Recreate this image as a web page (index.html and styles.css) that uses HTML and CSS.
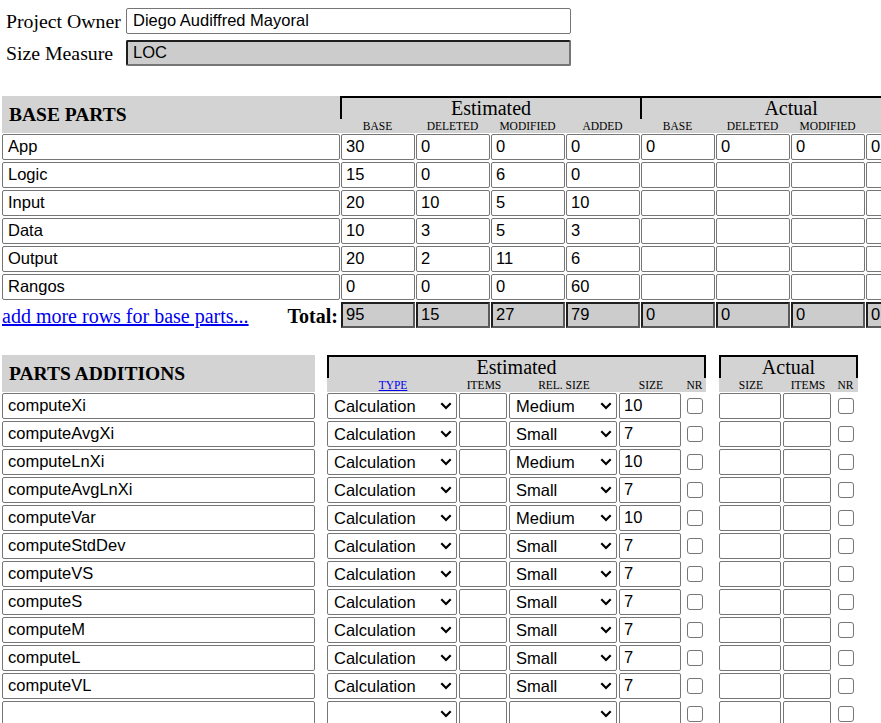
FILE: index.html
```html
<!DOCTYPE html>
<html>
<head>
<meta charset="utf-8">
<title>PSP Size Estimating</title>
<link rel="stylesheet" href="styles.css">
</head>
<body>
<div class="meta">
  <label>Project Owner</label>
  <input class="field" type="text" value="Diego Audiffred Mayoral">
  <label>Size Measure</label>
  <input class="field ro" type="text" value="LOC" readonly>
</div>

<table class="grid base">
  <colgroup>
    <col class="c-name"><col class="c-num"><col class="c-num"><col class="c-num"><col class="c-num"><col class="c-num"><col class="c-num"><col class="c-num"><col class="c-num">
  </colgroup>
  <thead>
    <tr class="grp">
      <th rowspan="2" class="title">BASE PARTS</th>
      <th colspan="4" class="group">Estimated</th>
      <th colspan="4" class="group">Actual</th>
    </tr>
    <tr class="sub">
      <th>BASE</th><th>DELETED</th><th>MODIFIED</th><th>ADDED</th>
      <th>BASE</th><th>DELETED</th><th>MODIFIED</th><th>ADDED</th>
    </tr>
  </thead>
  <tbody>
    <tr><td><input class="nm" value="App"></td><td><input class="num" value="30"></td><td><input class="num" value="0"></td><td><input class="num" value="0"></td><td><input class="num" value="0"></td><td><input class="num" value="0"></td><td><input class="num" value="0"></td><td><input class="num" value="0"></td><td><input class="num" value="0"></td></tr>
    <tr><td><input class="nm" value="Logic"></td><td><input class="num" value="15"></td><td><input class="num" value="0"></td><td><input class="num" value="6"></td><td><input class="num" value="0"></td><td><input class="num" value=""></td><td><input class="num" value=""></td><td><input class="num" value=""></td><td><input class="num" value=""></td></tr>
    <tr><td><input class="nm" value="Input"></td><td><input class="num" value="20"></td><td><input class="num" value="10"></td><td><input class="num" value="5"></td><td><input class="num" value="10"></td><td><input class="num" value=""></td><td><input class="num" value=""></td><td><input class="num" value=""></td><td><input class="num" value=""></td></tr>
    <tr><td><input class="nm" value="Data"></td><td><input class="num" value="10"></td><td><input class="num" value="3"></td><td><input class="num" value="5"></td><td><input class="num" value="3"></td><td><input class="num" value=""></td><td><input class="num" value=""></td><td><input class="num" value=""></td><td><input class="num" value=""></td></tr>
    <tr><td><input class="nm" value="Output"></td><td><input class="num" value="20"></td><td><input class="num" value="2"></td><td><input class="num" value="11"></td><td><input class="num" value="6"></td><td><input class="num" value=""></td><td><input class="num" value=""></td><td><input class="num" value=""></td><td><input class="num" value=""></td></tr>
    <tr><td><input class="nm" value="Rangos"></td><td><input class="num" value="0"></td><td><input class="num" value="0"></td><td><input class="num" value="0"></td><td><input class="num" value="60"></td><td><input class="num" value=""></td><td><input class="num" value=""></td><td><input class="num" value=""></td><td><input class="num" value=""></td></tr>
    <tr class="total">
      <td><div class="totlabel"><a href="#">add more rows for base parts...</a><b>Total:</b></div></td>
      <td><input class="num tot" value="95" readonly></td><td><input class="num tot" value="15" readonly></td><td><input class="num tot" value="27" readonly></td><td><input class="num tot" value="79" readonly></td>
      <td><input class="num tot" value="0" readonly></td><td><input class="num tot" value="0" readonly></td><td><input class="num tot" value="0" readonly></td><td><input class="num tot" value="0" readonly></td>
    </tr>
  </tbody>
</table>

<table class="grid adds">
  <colgroup>
    <col class="a-name"><col class="a-gap1"><col class="a-type"><col class="a-items"><col class="a-rel"><col class="a-size"><col class="a-nr"><col class="a-gap2"><col class="a-size"><col class="a-items"><col class="a-nr2">
  </colgroup>
  <thead>
    <tr class="grp">
      <th rowspan="2" class="title">PARTS ADDITIONS</th>
      <th rowspan="2" class="blank"></th>
      <th colspan="5" class="group boxed">Estimated</th>
      <th rowspan="2" class="blank"></th>
      <th colspan="3" class="group boxed">Actual</th>
    </tr>
    <tr class="sub">
      <th><a href="#">TYPE</a></th><th>ITEMS</th><th>REL. SIZE</th><th>SIZE</th><th>NR</th>
      <th>SIZE</th><th>ITEMS</th><th>NR</th>
    </tr>
  </thead>
  <tbody>
    <tr><td><input class="nm" value="computeXi"></td><td></td><td><select class="sel"><option>Calculation</option></select></td><td><input class="num" value=""></td><td><select class="sel"><option>Medium</option></select></td><td><input class="num" value="10"></td><td class="chk"><input type="checkbox"></td><td></td><td><input class="num" value=""></td><td><input class="num" value=""></td><td class="chk"><input type="checkbox"></td></tr>
    <tr><td><input class="nm" value="computeAvgXi"></td><td></td><td><select class="sel"><option>Calculation</option></select></td><td><input class="num" value=""></td><td><select class="sel"><option>Small</option></select></td><td><input class="num" value="7"></td><td class="chk"><input type="checkbox"></td><td></td><td><input class="num" value=""></td><td><input class="num" value=""></td><td class="chk"><input type="checkbox"></td></tr>
    <tr><td><input class="nm" value="computeLnXi"></td><td></td><td><select class="sel"><option>Calculation</option></select></td><td><input class="num" value=""></td><td><select class="sel"><option>Medium</option></select></td><td><input class="num" value="10"></td><td class="chk"><input type="checkbox"></td><td></td><td><input class="num" value=""></td><td><input class="num" value=""></td><td class="chk"><input type="checkbox"></td></tr>
    <tr><td><input class="nm" value="computeAvgLnXi"></td><td></td><td><select class="sel"><option>Calculation</option></select></td><td><input class="num" value=""></td><td><select class="sel"><option>Small</option></select></td><td><input class="num" value="7"></td><td class="chk"><input type="checkbox"></td><td></td><td><input class="num" value=""></td><td><input class="num" value=""></td><td class="chk"><input type="checkbox"></td></tr>
    <tr><td><input class="nm" value="computeVar"></td><td></td><td><select class="sel"><option>Calculation</option></select></td><td><input class="num" value=""></td><td><select class="sel"><option>Medium</option></select></td><td><input class="num" value="10"></td><td class="chk"><input type="checkbox"></td><td></td><td><input class="num" value=""></td><td><input class="num" value=""></td><td class="chk"><input type="checkbox"></td></tr>
    <tr><td><input class="nm" value="computeStdDev"></td><td></td><td><select class="sel"><option>Calculation</option></select></td><td><input class="num" value=""></td><td><select class="sel"><option>Small</option></select></td><td><input class="num" value="7"></td><td class="chk"><input type="checkbox"></td><td></td><td><input class="num" value=""></td><td><input class="num" value=""></td><td class="chk"><input type="checkbox"></td></tr>
    <tr><td><input class="nm" value="computeVS"></td><td></td><td><select class="sel"><option>Calculation</option></select></td><td><input class="num" value=""></td><td><select class="sel"><option>Small</option></select></td><td><input class="num" value="7"></td><td class="chk"><input type="checkbox"></td><td></td><td><input class="num" value=""></td><td><input class="num" value=""></td><td class="chk"><input type="checkbox"></td></tr>
    <tr><td><input class="nm" value="computeS"></td><td></td><td><select class="sel"><option>Calculation</option></select></td><td><input class="num" value=""></td><td><select class="sel"><option>Small</option></select></td><td><input class="num" value="7"></td><td class="chk"><input type="checkbox"></td><td></td><td><input class="num" value=""></td><td><input class="num" value=""></td><td class="chk"><input type="checkbox"></td></tr>
    <tr><td><input class="nm" value="computeM"></td><td></td><td><select class="sel"><option>Calculation</option></select></td><td><input class="num" value=""></td><td><select class="sel"><option>Small</option></select></td><td><input class="num" value="7"></td><td class="chk"><input type="checkbox"></td><td></td><td><input class="num" value=""></td><td><input class="num" value=""></td><td class="chk"><input type="checkbox"></td></tr>
    <tr><td><input class="nm" value="computeL"></td><td></td><td><select class="sel"><option>Calculation</option></select></td><td><input class="num" value=""></td><td><select class="sel"><option>Small</option></select></td><td><input class="num" value="7"></td><td class="chk"><input type="checkbox"></td><td></td><td><input class="num" value=""></td><td><input class="num" value=""></td><td class="chk"><input type="checkbox"></td></tr>
    <tr><td><input class="nm" value="computeVL"></td><td></td><td><select class="sel"><option>Calculation</option></select></td><td><input class="num" value=""></td><td><select class="sel"><option>Small</option></select></td><td><input class="num" value="7"></td><td class="chk"><input type="checkbox"></td><td></td><td><input class="num" value=""></td><td><input class="num" value=""></td><td class="chk"><input type="checkbox"></td></tr>
    <tr><td><input class="nm" value=""></td><td></td><td><select class="sel"><option></option></select></td><td><input class="num" value=""></td><td><select class="sel"><option></option></select></td><td><input class="num" value=""></td><td class="chk"><input type="checkbox"></td><td></td><td><input class="num" value=""></td><td><input class="num" value=""></td><td class="chk"><input type="checkbox"></td></tr>
  </tbody>
</table>
</body>
</html>
```

FILE: styles.css
```css
html {
  overflow: hidden;
}

body {
  margin: 0;
  background: #fff;
  color: #000;
  font-family: "Liberation Serif", "Times New Roman", serif;
  font-size: 20px;
}

.meta {
  display: grid;
  grid-template-columns: 120px 445px;
  row-gap: 6px;
  align-items: center;
  padding: 8px 0 0 6px;
}

.meta label {
  font-size: 19.8px;
}

.field {
  box-sizing: border-box;
  height: 26px;
  margin: 0;
  padding: 0 6px 2px;
  border: 1px solid #767676;
  border-radius: 2px;
  font: 16.5px "Liberation Sans", Arial, sans-serif;
  color: #000;
  background: #fff;
}

.field.ro {
  background: #ccc;
  border-width: 2px;
  border-style: solid;
  border-color: #1e1e1e #767676 #767676 #1e1e1e;
  padding-left: 5px;
}

/* tables */
.grid {
  border-collapse: separate;
  border-spacing: 0;
  table-layout: fixed;
  margin-left: 2px;
}

.grid th,
.grid td {
  padding: 0;
}

.base {
  margin-top: 30px;
  width: 938px;
}

.c-name { width: 338px; }
.c-num { width: 75px; }

.title {
  background: #d3d3d3;
  text-align: left;
  vertical-align: middle;
  padding-left: 7px !important;
  font-size: 19.5px;
  font-weight: bold;
}

.group {
  background: #d3d3d3;
  border-top: 2px solid #000;
  border-left: 2px solid #000;
  height: 21px;
  line-height: 21px;
  font-size: 20px;
  font-weight: normal;
  text-align: center;
  vertical-align: middle;
}

.group.boxed {
  border-right: 2px solid #000;
}

.sub th {
  background: #d3d3d3;
  height: 14px;
  line-height: 14px;
  font-size: 11.5px;
  font-weight: normal;
  text-align: center;
  vertical-align: middle;
  white-space: nowrap;
}

.sub th a {
  color: #0000ee;
}

.blank {
  background: #fff;
}

.nm,
.num {
  display: block;
  box-sizing: border-box;
  height: 26px;
  margin: 1px 0;
  padding: 0 4px 2px;
  border: 1px solid #767676;
  border-radius: 2px;
  font: 16.5px "Liberation Sans", Arial, sans-serif;
  color: #000;
  background: #fff;
}

.nm {
  width: 100%;
  padding-left: 5px;
}

.num {
  width: 74px;
  margin-left: 1px;
}

.num.tot {
  background: #ccc;
  border-width: 2px;
  border-style: solid;
  border-color: #1e1e1e #5a5a5a #5a5a5a #1e1e1e;
  border-radius: 0;
  padding-left: 3px;
}

.totlabel {
  display: flex;
  justify-content: space-between;
  align-items: center;
  height: 28px;
  padding-right: 2px;
  font-size: 20px;
}

.totlabel a {
  color: #0000ee;
  padding-top: 3px;
}

.totlabel b {
  padding-top: 3px;
}

/* parts additions */
.adds {
  margin-top: 26px;
  width: 856px;
}

.a-name { width: 313px; }
.a-gap1 { width: 12px; }
.a-type { width: 132px; }
.a-items { width: 50px; }
.a-rel { width: 110px; }
.a-size { width: 64px; }
.a-nr { width: 23px; }
.a-gap2 { width: 13px; }
.a-nr2 { width: 25px; }

.adds .num {
  width: calc(100% - 2px);
  margin-left: 0;
}

.sel {
  display: block;
  box-sizing: border-box;
  width: calc(100% - 2px);
  height: 26px;
  margin: 1px 0;
  padding: 0 20px 1px 6px;
  font: 16.5px "Liberation Sans", Arial, sans-serif;
  color: #000;
  border: 1px solid #767676;
  border-radius: 2px;
  -webkit-appearance: none;
  appearance: none;
  background-color: #fff;
  background-image: url("data:image/svg+xml,%3Csvg xmlns='http://www.w3.org/2000/svg' width='12' height='8' viewBox='0 0 12 8'%3E%3Cpath d='M1.3 1.3 L6 6 L10.7 1.3' fill='none' stroke='%23000' stroke-width='2.2'/%3E%3C/svg%3E");
  background-repeat: no-repeat;
  background-position: right 4px center;
  background-size: 12px 8px;
}

.chk {
  text-align: center;
  vertical-align: middle;
}

.chk input {
  -webkit-appearance: none;
  appearance: none;
  display: block;
  box-sizing: border-box;
  width: 16px;
  height: 16px;
  margin: 0 auto;
  border: 1px solid #767676;
  border-radius: 3px;
  background: #fff;
}
```
